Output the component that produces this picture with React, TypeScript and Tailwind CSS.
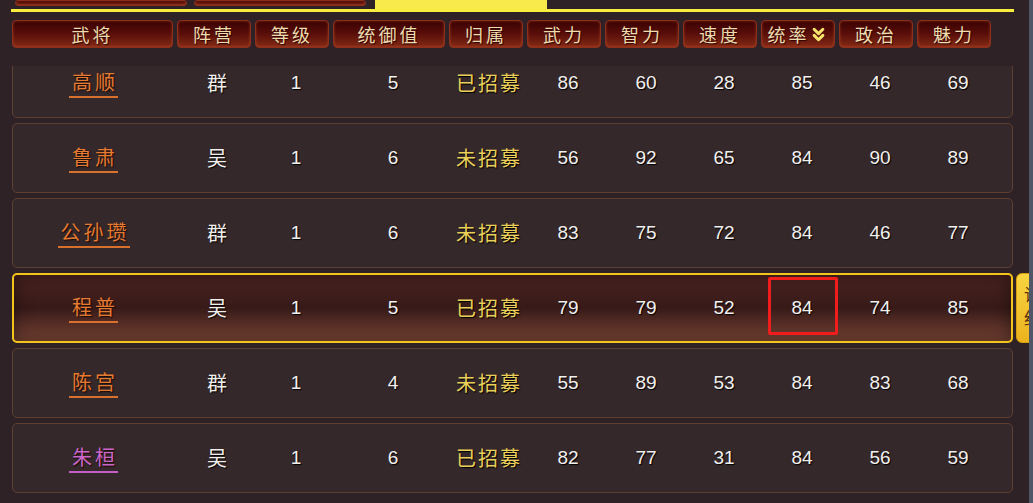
import { ChevronsDown } from 'lucide-react'

type Hero = {
  name: string
  faction: string
  level: number
  command: number
  status: string
  stats: number[]
  purple?: boolean
  active?: boolean
}

const HEROES: Hero[] = [
  { name: '高顺', faction: '群', level: 1, command: 5, status: '已招募', stats: [86, 60, 28, 85, 46, 69] },
  { name: '鲁肃', faction: '吴', level: 1, command: 6, status: '未招募', stats: [56, 92, 65, 84, 90, 89] },
  { name: '公孙瓒', faction: '群', level: 1, command: 6, status: '未招募', stats: [83, 75, 72, 84, 46, 77] },
  { name: '程普', faction: '吴', level: 1, command: 5, status: '已招募', stats: [79, 79, 52, 84, 74, 85], active: true },
  { name: '陈宫', faction: '群', level: 1, command: 4, status: '未招募', stats: [55, 89, 53, 84, 83, 68] },
  { name: '朱桓', faction: '吴', level: 1, command: 6, status: '已招募', stats: [82, 77, 31, 84, 56, 59], purple: true },
]

const HEADERS = ['武将', '阵营', '等级', '统御值', '归属', '武力', '智力', '速度', '统率', '政治', '魅力']

const GRID = 'grid grid-cols-[161px_74px_74px_112px_74px_74px_74px_74px_74px_74px_74px] gap-x-[4px]'
const CJK = "font-['Noto_Sans_CJK_SC','Noto_Sans_CJK_JP',sans-serif]"
const NUM = "font-['Liberation_Sans','Noto_Sans',sans-serif]"
const redBtn =
  'rounded-[4px] border border-[#8e2e1c] bg-gradient-to-b from-[#3a0303] via-[#5a0f0a] to-[#832a15] shadow-[inset_0_0_3px_rgba(255,120,60,0.35)]'

const HeroRow = ({ hero }: { hero: Hero }) => {
  const cells: (string | number)[] = [hero.faction, hero.level, hero.command, hero.status, ...hero.stats]
  return (
    <div
      className={`relative h-[70px] w-[1001px] shrink-0 rounded-[5px] ${
        hero.active
          ? 'border-2 border-[#f3c51c] bg-gradient-to-b from-[#4a2421] via-[#371a18] to-[#7a4535] shadow-[inset_0_0_18px_rgba(0,0,0,0.45)]'
          : 'border border-[#5e3f31] bg-[#35282a]'
      }`}
    >
      <div className={`${GRID} h-full items-center ${hero.active ? '-ml-px' : ''}`}>
        <div className="flex justify-center">
          <span
            className={`${CJK} border-b-2 pb-[1px] pl-[3px] text-[20px] leading-[26px] tracking-[3px] [text-shadow:1px_1px_1px_#1a0a05] ${
              hero.purple ? 'border-[#c45ec4] text-[#c966c9]' : 'border-[#d8712e] text-[#e57a32]'
            }`}
          >
            {hero.name}
          </span>
        </div>
        {cells.map((value, index) => (
          <div
            key={index}
            className={`relative flex h-full items-center justify-center whitespace-nowrap ${index === 3 ? 'pl-[4px]' : 'pl-[6px]'}`}
          >
            {index === 7 && hero.active && (
              <div className="absolute left-[6px] top-[2px] h-[58px] w-[70px] rounded-[2px] border-[3px] border-[#f11c1c]" />
            )}
            <span
              className={`${
                typeof value === 'number' ? `${NUM} text-[19px] text-[#f2f0ee]` : `${CJK} text-[20px] tracking-[2px]`
              } ${index === 3 ? 'text-[#ead05a]' : index === 0 ? 'text-[#f1efec]' : ''} [text-shadow:1px_1px_1px_#000]`}
            >
              {value}
            </span>
          </div>
        ))}
      </div>
      {hero.active && (
        <div className="absolute left-[1002px] top-[-2px] z-10 flex h-[70px] w-[30px] flex-col items-start rounded-l-[6px] border border-[#d99d12] bg-gradient-to-b from-[#f7d540] to-[#ebb31c] pl-[7px] pt-[8px]">
          <span className={`${CJK} text-[17px] leading-[24px] text-[#5b2e0c]`}>详</span>
          <span className={`${CJK} text-[17px] leading-[24px] text-[#5b2e0c]`}>细</span>
        </div>
      )}
    </div>
  )
}

export default function App() {
  return (
    <div className="relative flex h-[503px] w-[1033px] overflow-hidden bg-[#2e2227]">
      <div className="flex flex-1 flex-col">
        <div className="flex h-[9px] items-start gap-[7px] pl-[15px]">
          <div className={`h-[6px] w-[172px] rounded-b-[4px] ${redBtn}`} />
          <div className={`h-[6px] w-[172px] rounded-b-[4px] ${redBtn}`} />
          <div className="ml-[2px] h-[9px] w-[172px] bg-[#f7ea4a]" />
        </div>
        <div className="ml-[11px] h-[3px] w-[1003px] bg-[#f8ec3e]" />
        <div className={`${GRID} ml-[12px] mt-[8px] h-[28px]`}>
          {HEADERS.map((label) => (
            <div key={label} className={`${redBtn} flex items-center justify-center`}>
              <span className={`${CJK} text-[18px] leading-none tracking-[3px] text-[#ecdcae] [text-shadow:1px_1px_1px_#2a0000]`}>
                {label}
              </span>
              {label === '统率' && (
                <ChevronsDown size={21} strokeWidth={3.4} className="-ml-[2px] mt-[1px] text-[#f6e46c]" />
              )}
            </div>
          ))}
        </div>
        <div className="mt-[18px] flex-1 overflow-hidden">
          <div className="-mt-[18px] ml-[12px] flex flex-col gap-[5px]">
            {HEROES.map((hero) => (
              <HeroRow key={hero.name} hero={hero} />
            ))}
          </div>
        </div>
      </div>
      <div className="w-[4px] shrink-0 bg-[#4f5668]" />
    </div>
  )
}
